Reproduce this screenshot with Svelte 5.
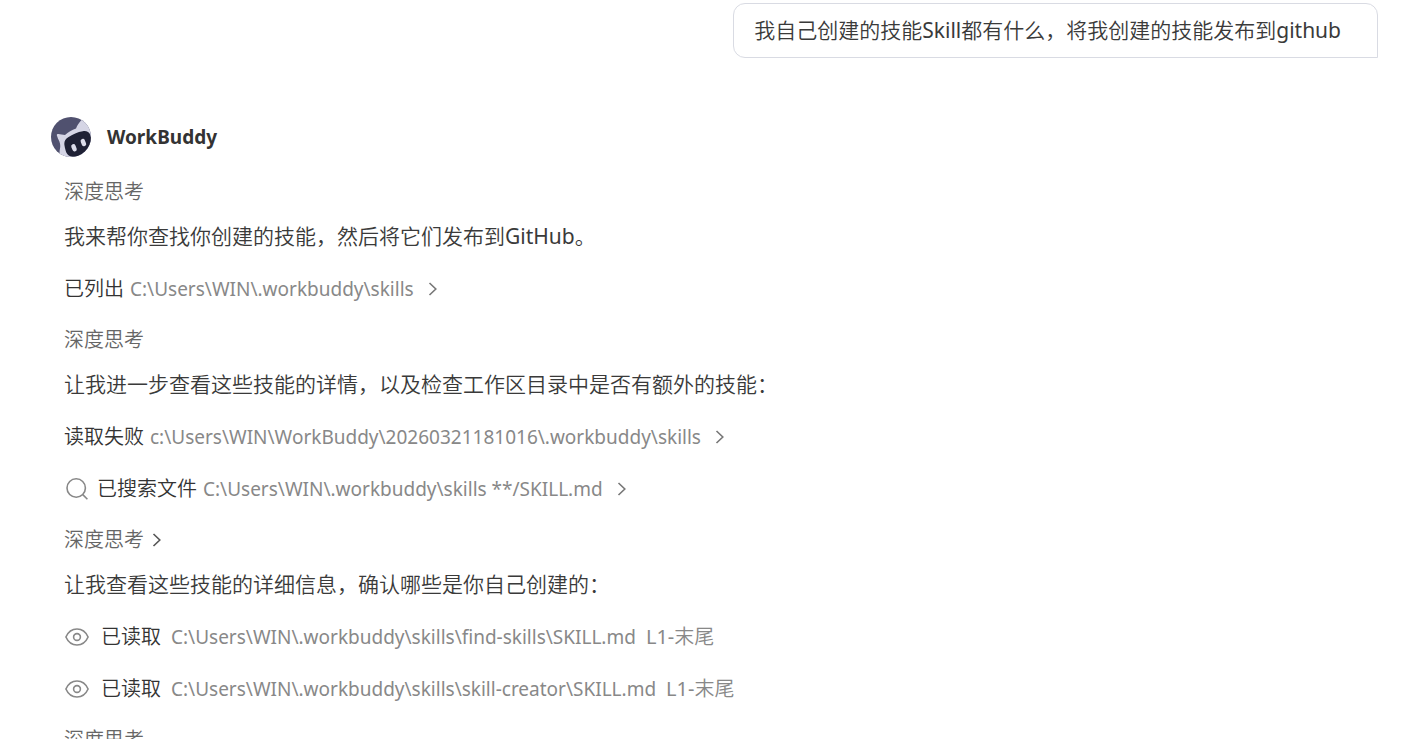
<script lang="ts">
  type Step = {
    kind: 'think' | 'text' | 'list' | 'search' | 'read'
    label: string
    path?: string
    range?: string
    expandable?: boolean
  }

  const question = '我自己创建的技能Skill都有什么，将我创建的技能发布到github'

  const steps: Step[] = [
    { kind: 'think', label: '深度思考' },
    { kind: 'text', label: '我来帮你查找你创建的技能，然后将它们发布到GitHub。' },
    { kind: 'list', label: '已列出', path: 'C:\\Users\\WIN\\.workbuddy\\skills', expandable: true },
    { kind: 'think', label: '深度思考' },
    { kind: 'text', label: '让我进一步查看这些技能的详情，以及检查工作区目录中是否有额外的技能：' },
    {
      kind: 'list',
      label: '读取失败',
      path: 'c:\\Users\\WIN\\WorkBuddy\\20260321181016\\.workbuddy\\skills',
      expandable: true,
    },
    {
      kind: 'search',
      label: '已搜索文件',
      path: 'C:\\Users\\WIN\\.workbuddy\\skills **/SKILL.md',
      expandable: true,
    },
    { kind: 'think', label: '深度思考', expandable: true },
    { kind: 'text', label: '让我查看这些技能的详细信息，确认哪些是你自己创建的：' },
    {
      kind: 'read',
      label: '已读取',
      path: 'C:\\Users\\WIN\\.workbuddy\\skills\\find-skills\\SKILL.md',
      range: 'L1-末尾',
    },
    {
      kind: 'read',
      label: '已读取',
      path: 'C:\\Users\\WIN\\.workbuddy\\skills\\skill-creator\\SKILL.md',
      range: 'L1-末尾',
    },
    { kind: 'think', label: '深度思考' },
  ]
</script>

{#snippet chevron()}
  <svg class="chevron" viewBox="0 0 10 16" aria-hidden="true">
    <path d="M1.5 2 7.8 8 1.5 14" />
  </svg>
{/snippet}

{#snippet content(step: Step)}
  {#if step.kind === 'search'}
    <svg class="icon" viewBox="0 0 24 24" aria-hidden="true">
      <circle cx="11.2" cy="11" r="9.2" />
      <path d="m17.8 17.6 4.6 4.6" />
    </svg>
  {:else if step.kind === 'read'}
    <svg class="icon" viewBox="0 0 24 24" aria-hidden="true">
      <path d="M.9 12C3.2 6.8 7.3 4 12 4s8.8 2.8 11.1 8c-2.3 5.2-6.4 8-11.1 8S3.2 17.2.9 12Z" />
      <circle cx="12" cy="12" r="3.4" />
    </svg>
  {/if}
  <span class="label">{step.label}</span>
  {#if step.path}<span class="path">{step.path}</span>{/if}
  {#if step.range}<span class="range">{step.range}</span>{/if}
  {#if step.expandable}{@render chevron()}{/if}
{/snippet}

<main class="chat">
  <div class="question">{question}</div>

  <section class="answer">
    <header>
      <svg class="avatar" viewBox="0 0 40 40" aria-hidden="true">
        <defs>
          <clipPath id="avatar-clip"><circle cx="20" cy="20" r="20" /></clipPath>
        </defs>
        <g clip-path="url(#avatar-clip)">
          <rect width="40" height="40" fill="#50516f" />
          <path
            d="M5.8 18.2c-.1-1 .6-1.4 1.5-1.1l6.7.9c3.2-3 6.8-5.100 11-6.500 1.400-3.400 3-6 5.500-8.500L42 0v42H10c-1.600-3.400-1.800-6.600-1-10.500.5-2.700.3-4.500-.6-6.900-1-2.200-2-4.200-2.600-6.400Z"
            fill="#d5d5e5"
          />
          <path
            d="M13.600 29c-.9-3.900.4-6.700 3.600-8.800 4.500-3 9.400-5.200 14.600-6 3.800-.5 6.200.6 7.400 3.600L42 28 29 38.800c-3.400 1.200-8 1.400-10.800 0-3-1.600-3.900-6.200-4.600-9.800Z"
            fill="#1f2135"
          />
          <rect x="-2.200" y="-3.800" width="4.400" height="7.600" rx="2.200" transform="translate(23 30.800) rotate(-22)" fill="#dcdcea" />
          <rect x="-2.200" y="-3.800" width="4.400" height="7.600" rx="2.200" transform="translate(32.400 25.600) rotate(-22)" fill="#dcdcea" />
        </g>
      </svg>
      <h2>WorkBuddy</h2>
    </header>

    <div class="steps">
      {#each steps as step}
        {#if step.kind === 'text'}
          <p>{step.label}</p>
        {:else if step.expandable}
          <button type="button" class="row {step.kind}">{@render content(step)}</button>
        {:else}
          <div class="row {step.kind}">{@render content(step)}</div>
        {/if}
      {/each}
    </div>
  </section>
</main>

<style>
  :global(body) {
    background: #fff;
  }
  .chat {
    box-sizing: border-box;
    height: 100vh;
    overflow: hidden;
    padding: 3px 47px 0 51px;
    display: flex;
    flex-direction: column;
    font-family: 'Noto Sans', 'Noto Sans CJK SC DemiLight', 'Noto Sans CJK SC', sans-serif;
    font-size: 20px;
    color: #333;
  }
  .question,
  p {
    font-size: 21px;
    line-height: 36px;
    color: #3a3a3a;
  }
  .question {
    flex-shrink: 0;
    align-self: flex-end;
    padding: 8px 36px 9px 20px;
    border: 1px solid #d9dbe3;
    border-radius: 12px 12px 0 12px;
  }
  .answer {
    flex-shrink: 0;
    margin-top: 59px;
  }
  header {
    display: flex;
    align-items: center;
    gap: 16px;
    height: 40px;
  }
  .avatar {
    width: 40px;
    height: 40px;
  }
  h2 {
    margin: 0;
    font-size: 19px;
    line-height: 28px;
    font-weight: 700;
  }
  .steps {
    display: flex;
    flex-direction: column;
    align-items: flex-start;
    margin-top: 20px;
    padding-left: 13px;
  }
  p {
    margin: 0 0 19px;
  }
  .row {
    display: flex;
    align-items: center;
    gap: 6px;
    height: 32px;
    margin: 0 0 20px;
    padding: 0;
    border: 0;
    background: none;
    font: inherit;
    line-height: 28px;
    color: #333;
    text-align: left;
    white-space: pre;
  }
  button.row {
    cursor: pointer;
  }
  .row.think {
    height: 28px;
    margin: 1px 0 12px;
    color: #666;
  }
  .row.read {
    gap: 10px;
  }
  .path {
    font-size: 19px;
    color: #888;
  }
  .range {
    color: #888;
  }
  .icon {
    width: 24px;
    height: 24px;
    margin: 0 2px 0 1px;
    fill: none;
    stroke: #888;
    stroke-width: 1.6;
  }
  .chevron {
    width: 10px;
    height: 16px;
    margin-left: 8px;
    fill: none;
    stroke: #777;
    stroke-width: 1.6;
  }
  .think .chevron {
    margin-left: 2px;
    stroke: #555;
  }
</style>
